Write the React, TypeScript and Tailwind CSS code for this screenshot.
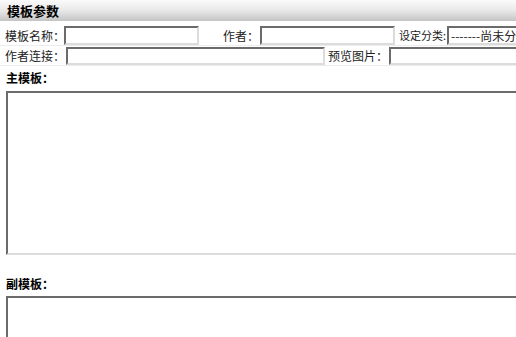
import React from 'react';

const font = { fontFamily: '"Noto Sans CJK SC", "Liberation Sans", sans-serif' };

const inset = 'shrink-0 border-2 border-t-[#6b6b6b] border-l-[#6b6b6b] border-b-[#dcdcdc] border-r-[#dcdcdc] bg-white';

const App: React.FC = () => {
  return (
    <div className="w-[516px] h-[337px] overflow-hidden bg-white text-[12px] text-[#222]" style={font}>
      {/* Header */}
      <div className="h-[21px] bg-gradient-to-b from-[#fbfbfb] via-[#e8e8e8] to-[#c4c4c4] pl-[7px] flex items-center font-bold text-[13px] text-black leading-none">
        模板参数
      </div>

      {/* Row 1 */}
      <div className="flex items-center h-[20px] mt-[5px] border-b border-[#ececec] whitespace-nowrap">
        <span className="shrink-0 w-[64px] pl-[5px]">模板名称：</span>
        <div className={`w-[135px] h-[19px] ${inset}`} />
        <span className="shrink-0 ml-[24px] w-[37px]">作者：</span>
        <div className={`w-[135px] h-[19px] ${inset}`} />
        <span className="shrink-0 ml-[4px] w-[48px] text-[11px]">设定分类:</span>
        <div className={`w-[100px] h-[19px] ${inset} flex items-center pl-[2px] leading-none overflow-hidden`}>-------尚未分类</div>
      </div>

      {/* Row 2 */}
      <div className="flex items-center h-[20px] border-b border-[#ececec] whitespace-nowrap">
        <span className="shrink-0 w-[66px] pl-[5px]">作者连接：</span>
        <div className={`w-[259px] h-[18px] ${inset}`} />
        <span className="shrink-0 ml-[3px] w-[61px]">预览图片：</span>
        <div className={`w-[140px] h-[18px] ${inset}`} />
      </div>

      {/* Main template */}
      <div className="pl-[6px] pt-[6px]">
        <div className="font-bold text-black leading-none h-[14px]">主模板：</div>
        <div className={`mt-[5px] w-[520px] h-[164px] ${inset}`} />
      </div>

      {/* Sub template */}
      <div className="pl-[6px] pt-[23px]">
        <div className="font-bold text-black leading-none h-[14px]">副模板：</div>
        <div className={`mt-[4px] w-[520px] h-[60px] ${inset}`} />
      </div>
    </div>
  );
};

export default App;
